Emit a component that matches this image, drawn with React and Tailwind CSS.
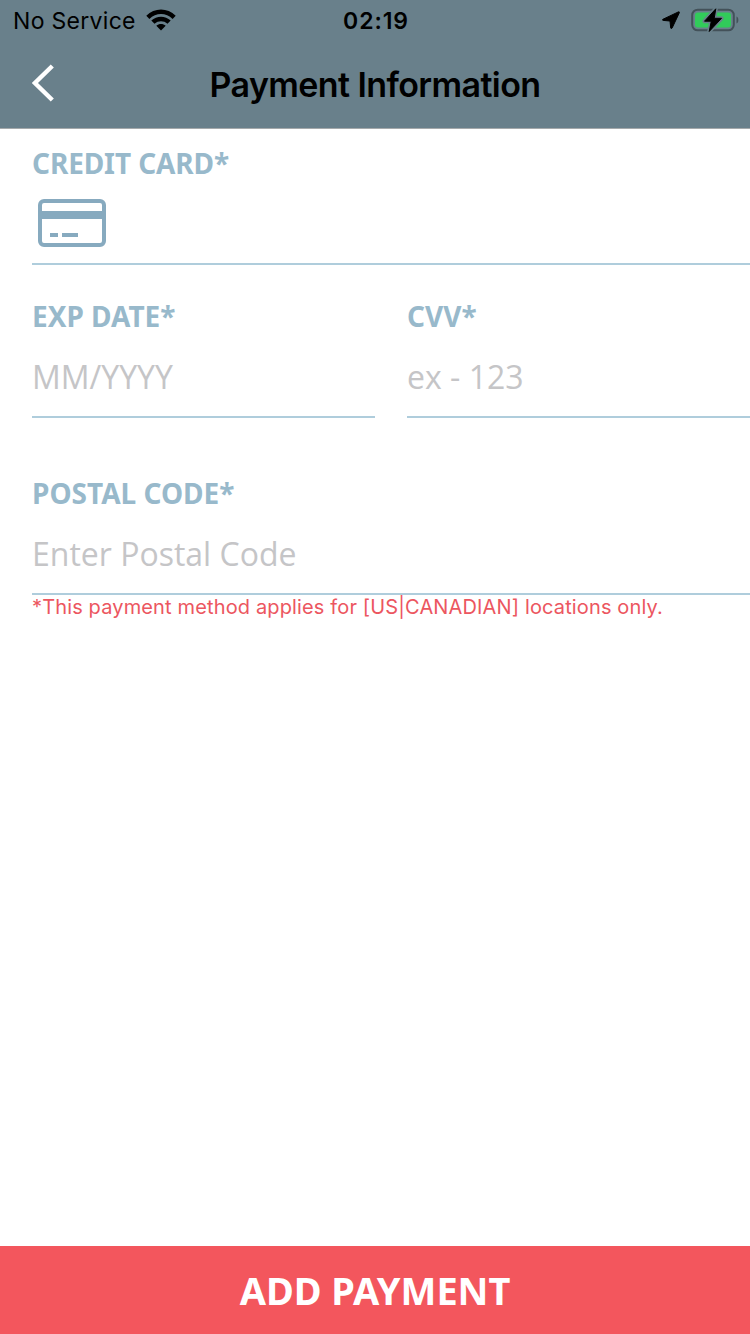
import React from "react";

function StatusBar() {
  return (
    <div className="grid h-10 grid-cols-[1fr_auto_1fr] items-center pl-[13px] pr-[11px] text-black">
      <div className="flex items-center gap-[10px]">
        <span className="whitespace-nowrap pt-0.5 text-[23px] leading-[38px] tracking-[0.3px]">No Service</span>
        <svg width="30" height="22" viewBox="0 0 30 22" fill="currentColor">
          <path d="M.3 6.700C8.500-1.700 21.500-1.700 29.700 6.700L26.600 9.900C20.200 3.500 9.800 3.500 3.400 9.900Z" />
          <path d="M5.300 11.600C10.800 6.400 19.200 6.400 24.700 11.600L21.500 14.800C17.800 11.500 12.200 11.500 8.500 14.800Z" />
          <path d="M10.300 16.800C13 14.300 17 14.300 19.700 16.800L15 21.600Z" />
        </svg>
      </div>
      <span className="pt-0.5 text-[23px] font-semibold leading-[38px] tracking-[0.9px]">02:19</span>
      <div className="flex items-center justify-end gap-[11px]">
        <svg width="18" height="18" viewBox="0 0 18 18" fill="currentColor" stroke="currentColor" strokeWidth="1" strokeLinejoin="round">
          <path d="M16.400.9.900 8.300C.2 8.800.4 9.300 1.200 9.400L8 10 8.700 16.900C8.800 17.600 9.700 17.700 10.200 16.900L17.300 1.800C17.600 1 17.200.6 16.400.9Z" />
        </svg>
        <svg width="48" height="24" viewBox="0 0 48 24">
          <rect x="1.200" y="1.700" width="41.600" height="20.600" rx="5.500" fill="none" stroke="#435159" strokeWidth="2" />
          <rect x="4" y="4.500" width="36" height="15" rx="3" fill="#31cb5a" />
          <path d="M45.500 8.500c2.500.8 2.500 6.200 0 7Z" fill="#435159" />
          <path d="M24.800.8 13.500 13.200H20.300L18.200 23.500 30.500 10.300H23.200Z" fill="#69808b" stroke="#69808b" strokeWidth="4" strokeLinejoin="round" />
          <path d="M24.800.8 13.500 13.200H20.300L18.200 23.500 30.500 10.300H23.200Z" fill="black" stroke="black" strokeWidth="1" strokeLinejoin="round" />
        </svg>
      </div>
    </div>
  );
}

function Header() {
  return (
    <header className="h-[129px] border-b border-[#a5a9ab] bg-[#69808b]">
      <StatusBar />
      <div className="grid h-[88px] grid-cols-[1fr_auto_1fr] items-center px-8">
        <button aria-label="Back" className="w-6 pb-0.5">
          <svg width="24" height="38" viewBox="0 0 24 38" fill="none" stroke="white" strokeWidth="4.400">
            <path d="M20.300 2 2.900 19 20.300 36" />
          </svg>
        </button>
        <h1 className="whitespace-nowrap pt-px text-[34px] font-semibold leading-none tracking-[-0.6px] text-black">
          Payment Information
        </h1>
      </div>
    </header>
  );
}

function Field({ label, labelClass = "", placeholder, children }) {
  return (
    <label className="flex h-[119px] flex-1 flex-col justify-between border-b-2 border-[#afcddc]">
      <span className={`whitespace-nowrap font-['Noto_Sans',sans-serif] text-[28px] font-bold leading-[34px] text-[#98b9cb] ${labelClass}`}>
        {label}
      </span>
      <span className="flex h-20 items-center whitespace-nowrap pt-0.5 font-['Open_Sans',sans-serif] text-[32px] text-[#c5c5c7]">
        {children ?? placeholder}
      </span>
    </label>
  );
}

function CardIcon() {
  return (
    <svg className="mb-0.5 ml-[6px]" width="68" height="48" viewBox="0 0 68 48" fill="none" stroke="#87aabf">
      <rect x="2" y="2" width="64" height="44" rx="4" strokeWidth="4" />
      <path d="M2 16H66" strokeWidth="8" />
      <path d="M12 36H20M24 36H40" strokeWidth="4" />
    </svg>
  );
}

export default function App() {
  return (
    <div className="flex h-[1334px] w-[750px] flex-col bg-white font-['Inter',sans-serif]">
      <Header />
      <main className="flex flex-1 flex-col pl-8 pt-[17px]">
        <div className="flex">
          <Field label="CREDIT CARD*" labelClass="tracking-[-0.1px]">
            <CardIcon />
          </Field>
        </div>
        <div className="mt-[34px] flex gap-8">
          <Field label="EXP DATE*" placeholder="MM/YYYY" />
          <Field label="CVV*" placeholder="ex - 123" />
        </div>
        <div className="mt-[58px] flex">
          <Field label="POSTAL CODE*" placeholder="Enter Postal Code" />
        </div>
        <p className="whitespace-nowrap text-[20px] leading-6 tracking-[0.14px] text-[#ec5660]">
          *This payment method applies for [US|CANADIAN] locations only.
        </p>
      </main>
      <button className="h-[88px] bg-[#f3565d] font-['Noto_Sans',sans-serif] text-[38px] font-bold leading-[88px] tracking-[-0.05px] text-white">
        ADD PAYMENT
      </button>
    </div>
  );
}
